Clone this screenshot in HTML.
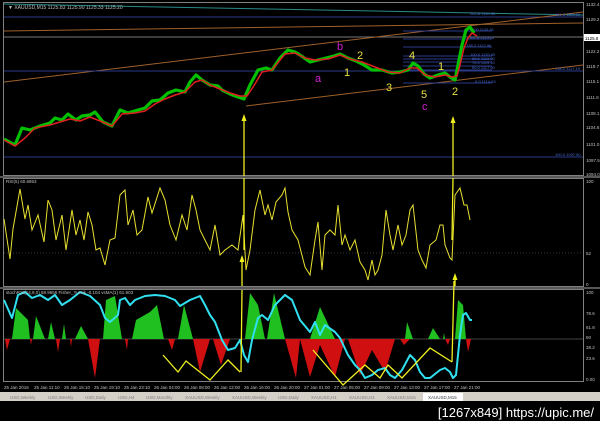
<!DOCTYPE html><html><head><meta charset="utf-8"><style>
html,body{margin:0;padding:0;background:#000;width:600px;height:421px;overflow:hidden}
svg{display:block}
text{font-family:"Liberation Sans",sans-serif}
</style></head><body>
<svg width="600" height="421" viewBox="0 0 600 421" xmlns="http://www.w3.org/2000/svg">
<rect width="600" height="421" fill="#000"/>
<!-- panel borders -->
<g stroke="#808080" fill="none" stroke-width="1">
<rect x="3.5" y="2.5" width="580" height="173"/>
<rect x="3.5" y="178.5" width="580" height="108"/>
<rect x="3.5" y="289.5" width="580" height="92"/>
</g>
<line x1="0" y1="177" x2="600" y2="177" stroke="#b0b0b0"/>
<line x1="0" y1="288" x2="600" y2="288" stroke="#b0b0b0"/>
<text x="8" y="9" font-size="5" fill="#c0c0c0">▼ XAUUSD,M15  1125.83 1125.90 1125.33 1125.20</text>
<!-- main panel lines -->
<line x1="4" y1="4" x2="583" y2="15" stroke="#2a8a8a" stroke-width="1"/>
<line x1="4" y1="17" x2="583" y2="17" stroke="#2b3a8a"/>
<line x1="4" y1="31" x2="583" y2="23" stroke="#a0602a"/>
<line x1="4" y1="37" x2="583" y2="37" stroke="#777"/>
<line x1="4" y1="82" x2="583" y2="12" stroke="#a0602a"/>
<line x1="246" y1="106" x2="583" y2="65" stroke="#a0602a"/>
<line x1="4" y1="71" x2="583" y2="71" stroke="#2b3a8a"/>
<line x1="4" y1="157" x2="583" y2="157" stroke="#2b3a8a"/>
<g stroke="#2b3a8a">
<line x1="403" y1="31" x2="492" y2="31"/><line x1="403" y1="39" x2="492" y2="39"/>
<line x1="403" y1="47" x2="492" y2="47"/><line x1="403" y1="56" x2="492" y2="56"/>
<line x1="403" y1="59" x2="492" y2="59"/><line x1="403" y1="62" x2="492" y2="62"/>
<line x1="403" y1="66" x2="492" y2="66"/><line x1="403" y1="70" x2="492" y2="70"/>
<line x1="403" y1="83" x2="492" y2="83"/>
</g>
<g font-size="4" fill="#4a6ad0">
<text x="470" y="15">261.8 1130.36</text><text x="555" y="16">161.8 1129.00</text>
<text x="472" y="31">200 1126.81</text><text x="469" y="39">161.8 1125.25</text>
<text x="466" y="47">138.2 1122.96</text><text x="470" y="56">100.0 1120.60</text>
<text x="472" y="60">88.6 1119.80</text><text x="472" y="64">76.4 1119.10</text>
<text x="472" y="69">50.0 1117.90</text><text x="475" y="83">0.0 1114.63</text>
<text x="555" y="70">138.2 1117.19</text><text x="555" y="156">100.0 1097.50</text>
</g>
<!-- price -->
<polyline fill="none" stroke="#00c000" stroke-width="3.2" stroke-linejoin="round" points="4,139 15,145 22,128 30,130 40,126 50,123 55,118 62,120 68,114 76,120 82,116 90,115 95,112 103,122 112,126 120,110 128,113 138,110 145,108 152,101 160,100 168,93 176,90 185,92 190,82 196,75 202,80 210,85 218,86 222,90 230,94 238,97 244,99 250,85 258,70 266,68 272,70 280,58 288,50 295,52 300,55 310,62 318,60 326,58 334,56 340,54 348,58 356,61 364,65 372,70 382,70 392,73 400,72 408,70 413,63 418,66 424,74 430,78 438,75 445,73 450,77 455,80 458,65 462,45 466,30 470,27 474,33"/>
<polyline fill="none" stroke="#e02020" stroke-width="1.5" stroke-linejoin="round" points="4,140 15,146 25,138 35,128 50,125 60,122 70,119 80,121 90,117 100,121 112,126 122,114 135,113 145,111 155,104 165,99 175,95 185,92 195,82 202,80 210,85 220,89 230,93 240,96 247,96 255,84 262,72 272,70 285,54 295,53 305,58 315,60 328,59 340,55 350,59 362,62 375,67 388,72 400,73 410,68 417,68 425,75 435,77 445,75 452,77 457,76 460,65 464,48 468,38 472,33 477,36"/>
<g font-size="11" font-family="Liberation Sans,sans-serif">
<text x="315" y="82" fill="#d020d0">a</text><text x="337" y="50" fill="#d020d0">b</text>
<text x="344" y="76" fill="#e8e040">1</text><text x="357" y="59" fill="#e8e040">2</text>
<text x="386" y="91" fill="#e8e040">3</text><text x="409" y="59" fill="#e8e040">4</text>
<text x="421" y="98" fill="#e8e040">5</text><text x="422" y="110" fill="#d020d0">c</text>
<text x="438" y="70" fill="#e8e040">1</text><text x="452" y="95" fill="#e8e040">2</text>
</g>
<!-- RSI -->
<line x1="4" y1="253" x2="583" y2="253" stroke="#333" stroke-dasharray="1,2"/>
<text x="6" y="183" font-size="4.5" fill="#c0c0c0">RSI(5) 60.6853</text>
<polyline fill="none" stroke="#e8e030" stroke-width="1" points="4,219 10,259 13,229 20,189 25,219 28,205 32,230 38,215 44,242 48,200 52,210 56,240 62,215 66,250 72,210 76,235 80,220 84,240 88,212 92,225 96,250 100,248 105,265 110,240 115,238 120,195 125,190 128,225 133,210 137,235 142,230 148,197 152,213 160,188 165,200 170,225 176,240 182,215 187,230 192,195 196,210 200,230 205,240 210,250 215,225 220,255 225,250 232,245 238,250 243,215 246,270 250,250 255,210 260,190 265,215 268,205 272,220 276,202 282,195 285,188 288,212 292,230 298,240 305,267 310,275 315,240 318,222 322,270 325,235 330,230 335,235 338,205 342,245 345,235 350,250 355,240 360,262 365,270 368,280 372,260 375,275 378,270 382,255 386,210 390,235 393,250 398,225 402,245 406,235 410,210 413,205 418,250 422,260 426,268 430,245 436,240 440,225 443,225 445,245 450,258 452,260 455,195 460,188 464,205 467,205 470,220"/>
<!-- bottom histogram -->
<line x1="4" y1="339" x2="583" y2="339" stroke="#444"/>
<g fill="#20c020">
<polygon points="12,339 16,308 28,320 30,339"/><polygon points="33,339 36,316 45,339"/>
<polygon points="48,339 51,322 55,339"/><polygon points="62,339 64,324 66,339"/>
<polygon points="75,339 81,326 88,339"/><polygon points="103,339 106,300 115,296 122,339"/>
<polygon points="132,339 136,320 150,312 157,305 164,339"/><polygon points="178,339 184,305 193,339"/>
<polygon points="245,339 250,293 258,305 265,339"/><polygon points="267,339 274,293 285,339"/>
<polygon points="310,339 320,307 335,339"/><polygon points="405,339 407,322 413,339"/>
<polygon points="428,339 433,328 440,339"/><polygon points="443,339 444,333 445,339"/>
<polygon points="455,339 458,300 463,305 466,339"/>
</g>
<g fill="#d01010">
<polygon points="5,339 7,350 10,339"/><polygon points="30,339 31,345 32,339"/>
<polygon points="56,339 58,352 60,339"/><polygon points="70,339 71,347 72,339"/>
<polygon points="88,339 95,378 100,339"/><polygon points="125,339 127,350 128,339"/>
<polygon points="168,339 172,350 175,339"/><polygon points="193,339 200,372 210,339"/>
<polygon points="213,339 221,365 230,339"/><polygon points="285,339 296,378 300,339"/>
<polygon points="300,339 310,377 320,345 335,377 345,339"/>
<polygon points="348,339 360,375 372,350 385,372 395,339"/>
<polygon points="400,339 404,345 410,339"/><polygon points="445,339 448,345 450,339"/>
<polygon points="466,339 468,352 471,339"/>
</g>
<polyline fill="none" stroke="#30e0f0" stroke-width="2" stroke-linejoin="round" points="4,300 12,318 18,295 25,292 32,298 40,295 48,300 55,295 62,305 70,300 80,292 90,296 100,305 105,318 110,322 118,315 120,300 125,298 130,305 135,300 145,296 155,295 165,296 175,300 180,306 190,300 200,296 205,305 210,315 215,322 222,340 228,350 235,348 240,340 244,355 248,362 252,340 258,318 262,315 268,320 275,305 285,295 292,300 300,320 310,332 315,322 320,335 325,325 335,332 340,338 348,355 355,365 360,370 365,378 372,375 378,370 385,368 390,375 395,378 402,370 410,355 415,360 420,372 425,378 430,378 440,370 445,368 450,372 453,378 456,375 460,335 463,315 466,313 470,320 472,320"/>
<g fill="none" stroke="#f0f020" stroke-width="1.3">
<polyline points="163,355 178,372 186,361 210,380 228,360 240,372"/>
<polyline points="313,350 343,385 365,365 380,378 388,365 402,378 430,348 452,362"/>
<!-- arrows -->
<line x1="244" y1="118" x2="244" y2="176"/><line x1="244" y1="178" x2="244" y2="250"/>
<line x1="242" y1="258" x2="242" y2="286"/><line x1="242" y1="290" x2="241" y2="372"/>
<line x1="453" y1="120" x2="453" y2="176"/><line x1="453" y1="178" x2="452" y2="240"/>
<line x1="455" y1="276" x2="455" y2="286"/><line x1="454" y1="281" x2="452" y2="362"/>
</g>
<g fill="#f0f020">
<polygon points="244,114 241.5,121 246.5,121"/><polygon points="242,255 239.5,262 244.5,262"/>
<polygon points="453,116 450.5,123 455.5,123"/><polygon points="455,273 452.5,280 457.5,280"/>
</g>
<text x="6" y="294" font-size="4.5" fill="#c0c0c0">stochRSI(14,9,0) 68.9656  Fisher_Yur4ik -0.104  vsMA(1) 61.903</text>
<!-- right axis -->
<g font-size="4.5" fill="#c0c0c0">
<text x="586" y="6">1132.4</text><text x="586" y="21">1129.2</text>
<text x="586" y="53">1122.2</text><text x="586" y="68">1118.7</text><text x="586" y="83">1115.1</text>
<text x="586" y="99">1111.6</text><text x="586" y="115">1108.1</text><text x="586" y="129">1104.6</text>
<text x="586" y="146">1101.0</text><text x="586" y="162">1097.5</text><text x="586" y="176">1094.0</text>
<text x="586" y="183">100</text><text x="586" y="255">52</text><text x="586" y="286">0</text>
<text x="586" y="294">100</text><text x="586" y="315">78.6</text><text x="586" y="329">61.8</text>
<text x="586" y="339">50</text><text x="586" y="349">38.2</text><text x="586" y="360">23.6</text>
<text x="586" y="381">0.00</text>
</g>
<rect x="584" y="34" width="16" height="7" fill="#fff"/>
<text x="585" y="40" font-size="4.5" fill="#000">1125.8</text>
<!-- time axis -->
<g font-size="4.5" fill="#c0c0c0">
<text x="4" y="389">25 Jan 2016</text><text x="34" y="389">25 Jan 11:10</text><text x="64" y="389">25 Jan 15:10</text>
<text x="94" y="389">25 Jan 19:10</text><text x="124" y="389">25 Jan 23:10</text><text x="154" y="389">26 Jan 04:00</text>
<text x="184" y="389">26 Jan 08:00</text><text x="214" y="389">26 Jan 12:00</text><text x="244" y="389">26 Jan 16:00</text>
<text x="274" y="389">26 Jan 20:00</text><text x="304" y="389">27 Jan 01:00</text><text x="334" y="389">27 Jan 05:00</text>
<text x="364" y="389">27 Jan 09:00</text><text x="394" y="389">27 Jan 13:00</text><text x="424" y="389">27 Jan 17:00</text>
<text x="454" y="389">27 Jan 21:00</text>
</g>
<!-- tabs -->
<rect x="0" y="392" width="600" height="9" fill="#d4d0c8"/>
<g font-size="4.5" fill="#808080">
<text x="10" y="399">USD,Weekly</text><text x="48" y="399">USD,Weekly</text><text x="85" y="399">USD,Daily</text>
<text x="118" y="399">USD,H4</text><text x="146" y="399">USD,Monthly</text><text x="185" y="399">XAUUSD,Weekly</text>
<text x="232" y="399">XAUUSD,Weekly</text><text x="278" y="399">USD,Daily</text><text x="311" y="399">XAUUSD,H1</text>
<text x="349" y="399">XAUUSD,H1</text><text x="387" y="399">XAUUSD,M15</text>
</g>
<rect x="423" y="393" width="40" height="8" fill="#fff"/>
<text x="428" y="399" font-size="4.5" fill="#404040">XAUUSD,M15</text>
<rect x="0" y="401" width="600" height="20" fill="#000"/>
<text x="594" y="417" font-size="13" fill="#fff" text-anchor="end" font-family="Liberation Mono,monospace">[1267x849] https://upic.me/</text>
</svg>
</body></html>
